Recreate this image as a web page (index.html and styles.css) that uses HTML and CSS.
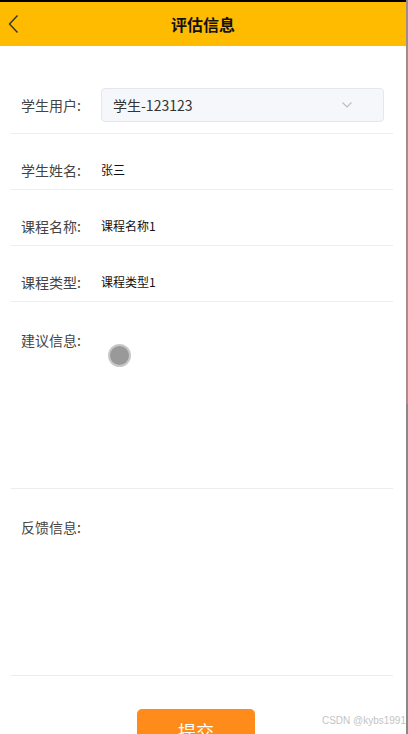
FILE: index.html
```html
<!DOCTYPE html>
<html lang="zh-CN">
<head>
  <meta charset="UTF-8">
  <title>评估信息</title>
  <link rel="stylesheet" href="styles.css">
</head>
<body>
<div class="pagina">
  <div class="topo">
    <span class="voltar">
      <svg width="12" height="20" viewBox="0 0 12 20"><polyline points="9.5,1.5 1.5,10 9.5,18.5" fill="none" stroke="#333" stroke-width="1.4"/></svg>
    </span>
    <h1>评估信息</h1>
  </div>

  <form class="formulario">
    <div class="linha">
      <label>学生用户:</label>
      <div class="seletor">
        <span>学生-123123</span>
        <svg width="10" height="6" viewBox="0 0 10 6"><polyline points="0.5,0.5 5,5 9.5,0.5" fill="none" stroke="#b8bcc4" stroke-width="1.1"/></svg>
      </div>
    </div>
    <div class="linha texto">
      <label>学生姓名:</label>
      <span class="valor">张三</span>
    </div>
    <div class="linha texto">
      <label>课程名称:</label>
      <span class="valor">课程名称1</span>
    </div>
    <div class="linha texto">
      <label>课程类型:</label>
      <span class="valor">课程类型1</span>
    </div>
    <div class="linha area">
      <label>建议信息:</label>
      <span class="toque"></span>
    </div>
    <div class="linha area">
      <label>反馈信息:</label>
    </div>
    <div class="acoes">
      <button type="button" class="enviar">提交</button>
    </div>
  </form>
  <span class="marca">CSDN @kybs1991</span>
</div>
<div class="rolagem"></div>
</body>
</html>
```

FILE: styles.css
```css
html, body {
  margin: 0;
  height: 100%;
  overflow: hidden;
}
body {
  display: flex;
  font-family: "Noto Sans CJK SC", "Noto Sans", sans-serif;
  background: #fff;
  color: #333;
}
.pagina {
  flex: 1;
  position: relative;
  overflow: hidden;
}
.rolagem {
  width: 2px;
  background: linear-gradient(#a08c88 0, #b08a88 55%, #888 55%, #888 100%);
}
.topo {
  height: 44px;
  border-top: 2px solid #000;
  background: #ffbb00;
  display: flex;
  align-items: center;
  justify-content: center;
  position: relative;
}
.topo h1 {
  margin: 0;
  font-size: 16px;
  font-weight: bold;
  color: #111;
}
.voltar {
  position: absolute;
  left: 8px;
  top: 12px;
}
.formulario {
  margin: 0 13px 0 11px;
  padding-top: 32px;
}
.linha {
  display: flex;
  align-items: center;
  padding: 10px 0 11px 10px;
  border-bottom: 1px solid #ededed;
  position: relative;
}
.linha label {
  width: 80px;
  flex-shrink: 0;
  font-size: 14px;
  line-height: 20px;
  color: #444;
}
.seletor {
  flex: 1;
  height: 34px;
  margin-right: 9px;
  box-sizing: border-box;
  border: 1px solid #e4e7ed;
  border-radius: 4px;
  background: #f5f7fa;
  display: flex;
  align-items: center;
  justify-content: space-between;
  padding: 0 31px 0 11px;
  font-size: 14px;
  color: #333;
}
.linha.texto {
  padding-top: 26px;
  padding-bottom: 9px;
}
.valor {
  font-size: 12px;
  line-height: 20px;
  color: #111;
}
.linha.area {
  align-items: flex-start;
  padding-top: 28px;
  padding-bottom: 0;
  height: 187px;
  box-sizing: border-box;
}
.toque {
  position: absolute;
  left: 97px;
  top: 42px;
  width: 19px;
  height: 19px;
  border-radius: 50%;
  background: #999;
  border: 2px solid #c8c8c8;
}
.acoes {
  display: flex;
  justify-content: center;
  padding-top: 33px;
  padding-right: 12px;
}
.enviar {
  width: 118px;
  height: 44px;
  border: none;
  border-radius: 5px;
  background: #ff8c1a;
  color: #fff;
  font-family: inherit;
  font-size: 18px;
}
.marca {
  position: absolute;
  right: 0;
  top: 715px;
  font-family: "Liberation Sans", Arial, sans-serif;
  font-size: 10px;
  color: #c4c4c4;
}
```
